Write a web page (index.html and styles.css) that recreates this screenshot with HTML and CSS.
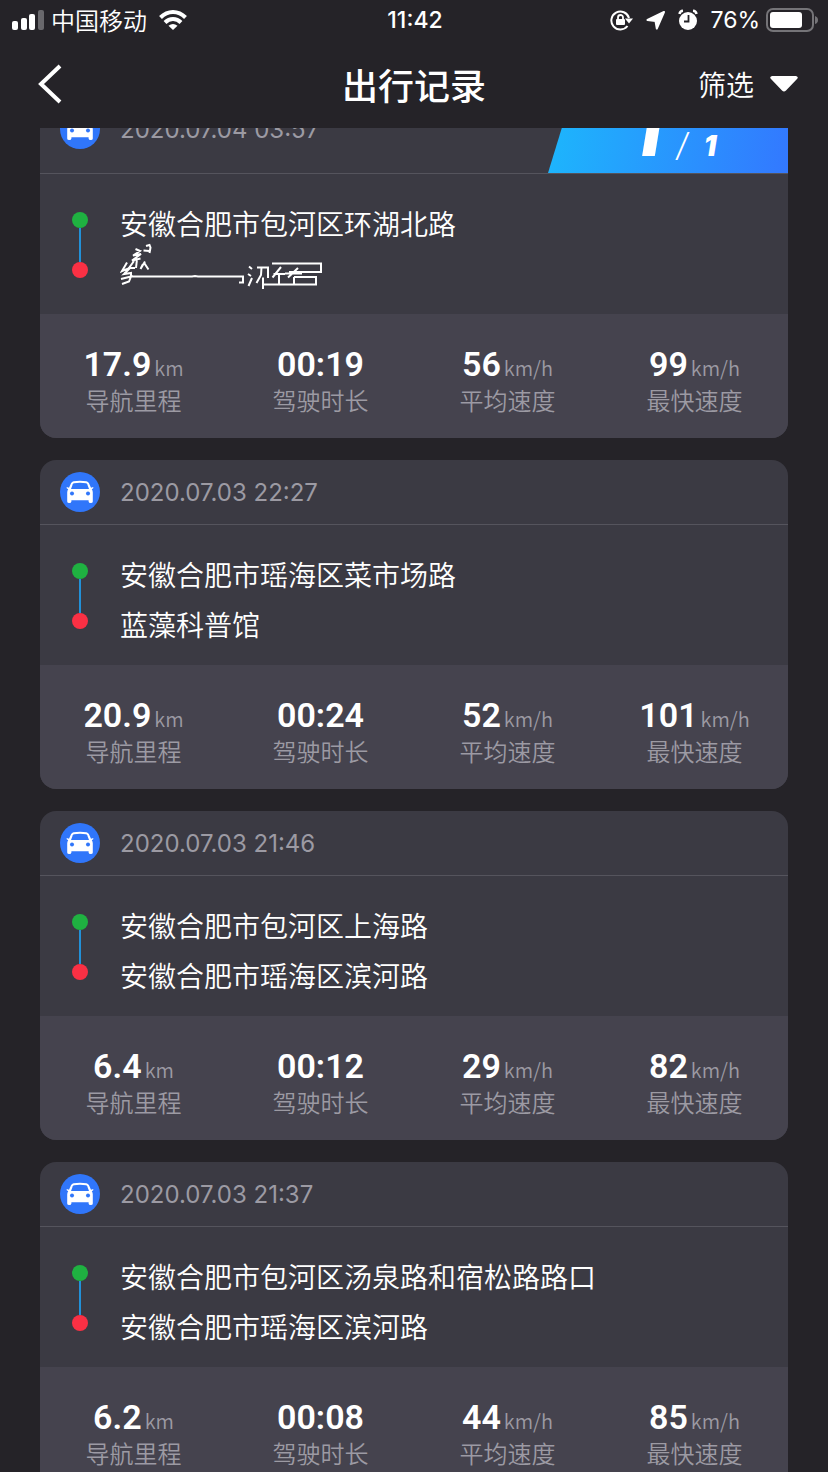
FILE: index.html
```html
<!DOCTYPE html>
<html lang="zh-CN">
<head>
    <meta charset="UTF-8">
    <meta name="viewport" content="width=device-width, initial-scale=1.0">
    <title>出行记录</title>
    <link rel="stylesheet" href="styles.css">
</head>
<body>

    <svg class="defs" aria-hidden="true">
        <symbol id="car" viewBox="0 0 40 40">
            <circle cx="20" cy="20" r="20" fill="#3076fa"/>
            <path d="M13.500 9.200Q20 8.200 26.500 9.200Q28.200 9.600 29 11.300L31 15.800L33.300 15Q34 16.500 31.800 17.200Q32.800 18.500 32.800 20.500V29.500Q32.800 31 30.800 31Q28.600 31 28.600 29.500V28.300H11.400V29.500Q11.400 31 9.200 31Q7.200 31 7.200 29.500V20.500Q7.200 18.500 8.200 17.200Q6 16.500 6.700 15L9 15.800L11 11.300Q11.800 9.600 13.500 9.200Z" fill="#fff"/>
            <path d="M14 11.200Q20 10.400 26 11.200Q26.800 11.400 27.200 12.300L29 17H11L12.800 12.300Q13.200 11.400 14 11.200Z" fill="#3076fa"/>
            <circle cx="12" cy="21.600" r="2" fill="#3076fa"/>
            <circle cx="28" cy="21.600" r="2" fill="#3076fa"/>
        </symbol>
    </svg>

    <div class="status-bar">
        <div class="status-left">
            <svg width="32" height="20" viewBox="0 0 32 20" fill="#fff">
                <rect x="0" y="11" width="6" height="9" rx="2"/>
                <rect x="9" y="8" width="6" height="12" rx="2"/>
                <rect x="17" y="4" width="6" height="16" rx="2"/>
                <rect x="26" y="0" width="6" height="20" rx="2" fill="#69686c"/>
            </svg>
            <span class="carrier">中国移动</span>
            <svg width="28" height="20" viewBox="0 0 28 20" fill="none" stroke="#fff" stroke-width="4">
                <path d="M1.500 7.500Q7 2 14 2T26.500 7.500"/>
                <path d="M6 12.500Q9.500 9 14 9T22 12.500"/>
                <path d="M9.500 15.800Q14 12.300 18.500 15.800L14 20Z" fill="#fff" stroke="none"/>
            </svg>
        </div>
        <div class="clock">11:42</div>
        <div class="status-right">
            <svg width="24" height="22" viewBox="0 0 24 22">
                <path d="M17.500 17A9 9 0 1 1 19 9" fill="none" stroke="#fff" stroke-width="2"/>
                <path d="M15 9.500H23L19 14.500Z" fill="#fff"/>
                <rect x="6" y="10" width="9" height="6" rx="1" fill="#fff"/>
                <path d="M8 10V8.500A2.500 2.500 0 0 1 13 8.500V10" fill="none" stroke="#fff" stroke-width="1.800"/>
            </svg>
            <svg width="20" height="20" viewBox="0 0 20 20">
                <path d="M18 2L1.500 10L9.500 11L10.800 18.500Z" fill="#fff" stroke="#fff" stroke-width="2" stroke-linejoin="round"/>
            </svg>
            <svg width="20" height="22" viewBox="0 0 20 22">
                <circle cx="10" cy="12" r="9" fill="#fff"/>
                <path d="M1.500 5Q2 2 5 1.800M18.500 5Q18 2 15 1.800" fill="none" stroke="#fff" stroke-width="2.500"/>
                <path d="M10.500 6V12.500H6" fill="none" stroke="#252328" stroke-width="1.800"/>
            </svg>
            <span class="percent">76%</span>
            <svg width="52" height="24" viewBox="0 0 52 24">
                <rect x="1" y="1" width="46" height="22" rx="6" fill="none" stroke="#757478" stroke-width="2"/>
                <rect x="4" y="4" width="32" height="16" rx="3" fill="#fff"/>
                <path d="M49 8Q52 9 52 12T49 16Z" fill="#757478"/>
            </svg>
        </div>
    </div>

    <header class="nav-bar">
        <button class="back" aria-label="返回">
            <svg width="24" height="40" viewBox="0 0 24 40" fill="none" stroke="#fff" stroke-width="4">
                <path d="M22 2L3 20L22 38"/>
            </svg>
        </button>
        <h1>出行记录</h1>
        <button class="filter">
            筛选
            <svg width="28" height="16" viewBox="0 0 28 16">
                <path d="M2 0H26Q29 1 27 3L16 14.500Q14 16.500 12 14.500L1 3Q-1 1 2 0Z" fill="#fff"/>
            </svg>
        </button>
    </header>

    <main class="trips">
        <div class="trip-list" id="tripList"></div>
    </main>

    <!-- scribble over a hidden address -->
    <template id="smudge">
        <svg class="smudge" width="206" height="45" viewBox="0 5 206 45" fill="none" stroke="#fff" stroke-width="2">
            <path d="M26 3L29.500 2L30.500 4.500L29.500 10M23.500 7.500L29.500 8"/>
            <path d="M15.500 6L20 8L13 12.500L21 11L12 17.500L20.500 15.500M17 16L16 25M25 18.500L20.500 26L22.500 22L24.500 20.500L28.500 26.500M14 18L9 25H15"/>
            <path d="M7 19.500L2 28L10 25L4 31L11 30L11 33M1 36L11 33.500L9 38.500L2 41M10 33.500H72L75 33L78 33.500H123V39.500H119"/>
            <path d="M129 23.500L132 26M128 31L131 33M128.500 43L132 35M137 24.500H148V35M141.500 24.500L141 32L136.500 40M143 34.500V46M143 41.500H196V34H174"/>
            <path d="M161 24L152.500 34.500M153.500 31H165M159 31V41M178 25L168 34.500M165 30.500H182M174 34V41M152 20.500H201V29H169"/>
        </svg>
    </template>

    <script src="trips.js"></script>
</body>
</html>
```
FILE: styles.css
```css
* {
    box-sizing: border-box;
}

body {
    margin: 0;
    height: 100vh;
    display: flex;
    flex-direction: column;
    overflow: hidden;
    background-color: #252328;
    color: #fff;
    font-family: Inter, "Noto Sans CJK SC", sans-serif;
}

button {
    border: 0;
    padding: 0;
    background: none;
    color: inherit;
    font: inherit;
}

svg {
    display: block;
    flex: none;
}

.defs {
    position: absolute;
    width: 0;
    height: 0;
}

/* status bar */
.status-bar {
    display: grid;
    grid-template-columns: 1fr auto 1fr;
    align-items: center;
    flex: none;
    height: 40px;
    padding: 0 10px 0 12px;
    font-size: 23px;
    line-height: 40px;
}

.status-left,
.status-right {
    display: flex;
    align-items: center;
    height: 40px;
}

.carrier {
    margin: 0 12px 0 7px;
    font-family: "Noto Sans CJK SC", sans-serif;
    font-size: 24px;
    font-weight: 350;
}

.clock {
    font-weight: 500;
}

.status-right {
    justify-content: flex-end;
    gap: 12px;
}

.percent {
    margin-right: -6px;
}

/* title row */
.nav-bar {
    display: grid;
    grid-template-columns: 1fr auto 1fr;
    align-items: center;
    flex: none;
    height: 88px;
    padding: 0 30px;
    font-family: "Noto Sans CJK SC", sans-serif;
}

.nav-bar h1 {
    margin: 0;
    font-size: 36px;
    font-weight: 500;
    line-height: 52px;
}

.back {
    justify-self: start;
    margin-left: 8px;
}

.filter {
    display: flex;
    align-items: center;
    justify-self: end;
    gap: 16px;
    font-size: 28px;
    font-weight: 350;
}

/* trips */
.trips {
    flex: 1;
    min-height: 0;
    overflow: hidden;
}

/* list is scrolled a little under the title row */
.trip-list {
    display: flex;
    flex-direction: column;
    gap: 22px;
    margin: -43px 40px 0;
}

.trip {
    flex: none;
    border-radius: 16px;
    overflow: hidden;
    background-color: #3b3a43;
}

.trip-head {
    display: flex;
    align-items: center;
    min-height: 65px;
    padding-left: 20px;
    border-bottom: 1px solid #55545d;
    color: #9c9aa3;
}

.trip-head time {
    margin-left: 20px;
    font-size: 24px;
}

.badge {
    display: flex;
    align-items: baseline;
    justify-content: center;
    gap: 16px;
    width: 240px;
    height: 88px;
    margin-left: auto;
    padding-left: 12px;
    background: linear-gradient(100deg, #1cb8fc, #3378ff);
    clip-path: polygon(27px 0, 100% 0, 100% 100%, 0 100%);
    color: #fff;
    font-size: 28px;
    font-style: italic;
    font-weight: 900;
    line-height: 96px;
}

.badge b {
    font-size: 64px;
    font-weight: 900;
}

.badge i {
    font-size: 32px;
    font-weight: 300;
}

.route {
    display: flex;
    padding: 24px 32px 16px;
}

.track {
    display: flex;
    flex-direction: column;
    align-items: center;
    padding-top: 14px;
}

.dot {
    width: 16px;
    height: 16px;
    border-radius: 50%;
    background-color: #1fb141;
}

.dot.end {
    background-color: #fa3044;
}

.track-line {
    width: 2px;
    height: 34px;
    background-color: #2290d8;
}

.places {
    margin-left: 32px;
    font-family: "Noto Sans CJK SC", sans-serif;
    font-size: 28px;
    font-weight: 350;
    line-height: 50px;
}

.places p {
    margin: 0;
    height: 50px;
}

.smudge {
    overflow: visible;
}

.stats {
    display: grid;
    grid-template-columns: repeat(4, 1fr);
    height: 124px;
    margin: 0;
    padding-top: 29px;
    background-color: #45434e;
    color: #9c9aa3;
    font-family: "Noto Sans CJK SC", sans-serif;
    font-weight: 350;
    text-align: center;
}

.stat {
    display: flex;
    flex-direction: column-reverse;
    justify-content: flex-end;
}

.stat dt {
    font-size: 24px;
    line-height: 22px;
}

.stat dd {
    margin: 0;
    font-size: 20px;
    line-height: 42px;
}

.stat b {
    color: #fff;
    font-family: Roboto, sans-serif;
    font-size: 34px;
    font-weight: 600;
}

.unit {
    margin-left: 3px;
}
```
FILE: trips.js
```js
const trips = [
    { time: '2020.07.04 03:57', from: '安徽合肥市包河区环湖北路', to: '', km: '17.9', duration: '00:19', avg: 56, max: 99, badge: true },
    { time: '2020.07.03 22:27', from: '安徽合肥市瑶海区菜市场路', to: '蓝藻科普馆', km: '20.9', duration: '00:24', avg: 52, max: 101 },
    { time: '2020.07.03 21:46', from: '安徽合肥市包河区上海路', to: '安徽合肥市瑶海区滨河路', km: '6.4', duration: '00:12', avg: 29, max: 82 },
    { time: '2020.07.03 21:37', from: '安徽合肥市包河区汤泉路和宿松路路口', to: '安徽合肥市瑶海区滨河路', km: '6.2', duration: '00:08', avg: 44, max: 85 }
];

function stat(label, value, unit) {
    const unitHtml = unit ? `<span class="unit">${unit}</span>` : '';
    return `<div class="stat"><dt>${label}</dt><dd><b>${value}</b>${unitHtml}</dd></div>`;
}

const smudge = document.getElementById('smudge').innerHTML;

document.getElementById('tripList').innerHTML = trips.map(trip => `
    <article class="trip">
        <div class="trip-head">
            <svg width="40" height="40"><use href="#car"/></svg>
            <time>${trip.time}</time>
            ${trip.badge ? '<div class="badge"><b>1</b><i>/</i><span>1</span></div>' : ''}
        </div>
        <div class="route">
            <div class="track"><span class="dot"></span><span class="track-line"></span><span class="dot end"></span></div>
            <div class="places"><p>${trip.from}</p><p>${trip.to || smudge}</p></div>
        </div>
        <dl class="stats">
            ${stat('导航里程', trip.km, 'km')}
            ${stat('驾驶时长', trip.duration, '')}
            ${stat('平均速度', trip.avg, 'km/h')}
            ${stat('最快速度', trip.max, 'km/h')}
        </dl>
    </article>`).join('');
```
